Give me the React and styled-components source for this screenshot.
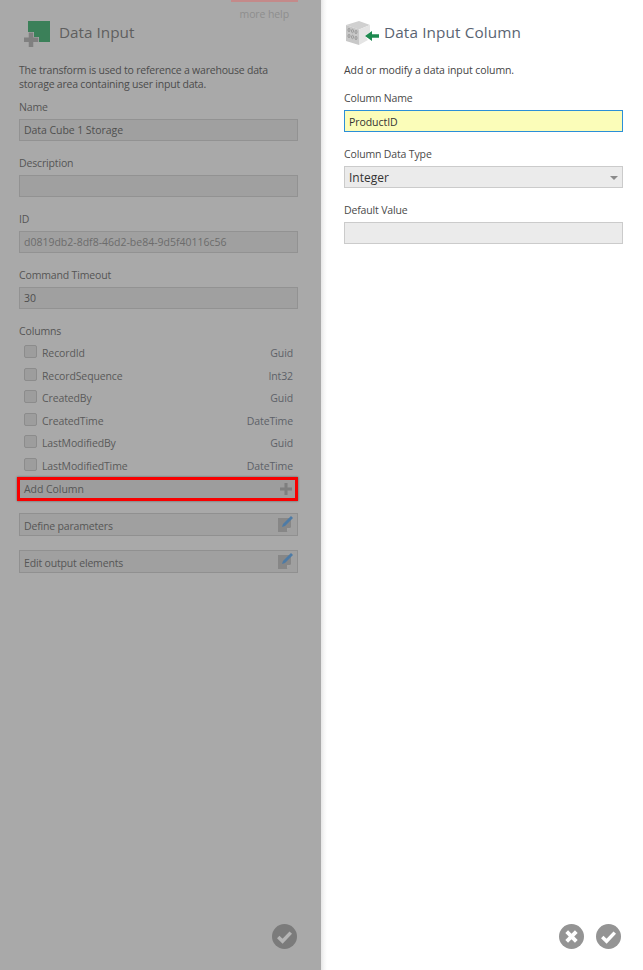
import React from "react";
import styled, { createGlobalStyle } from "styled-components";

const Global = createGlobalStyle`
  html, body { margin: 0; padding: 0; background: #fff; }
  #root { width: 643px; height: 970px; overflow: hidden; }
  * { box-sizing: border-box; }
`;

const Page = styled.div`
  display: flex;
  width: 643px;
  height: 970px;
  font-family: "Open Sans", "Noto Sans", sans-serif;
  font-size: 10.5px;
`;

const Panel = styled.section`
  position: relative;
  display: flex;
  flex-direction: column;
  height: 970px;
  padding: 0 ${p => (p.$dim ? "23px" : "20px")} 0 ${p => (p.$dim ? "19px" : "23px")};
  width: ${p => (p.$dim ? "321px" : "322px")};
  background: ${p => (p.$dim ? "#a9a9a9" : "linear-gradient(90deg, #e6e6e6 0, #f6f6f6 3px, #fff 6px)")};
  color: ${p => (p.$dim ? "#4d4d4d" : "#4a4a4a")};
`;

const HelpBar = styled.div`
  align-self: flex-end;
  width: 67px;
  height: 2px;
  background: #c48a8a;
`;

const MoreHelp = styled.div`
  align-self: flex-end;
  height: 14px;
  margin-top: 5px;
  padding-right: 9px;
  font-size: 10.5px;
  line-height: 14px;
  letter-spacing: -0.1px;
  color: #8e8e8e;
`;

const Header = styled.header`
  display: flex;
  align-items: center;
  gap: ${p => (p.$dim ? "9px" : "3px")};
  height: 24px;
  margin-top: ${p => (p.$dim ? "0" : "21px")};
  margin-left: ${p => (p.$dim ? "4px" : "1px")};
`;

const Title = styled.h1`
  margin: 0;
  padding-bottom: ${p => (p.$dim ? "3px" : "2px")};
  font-size: 15.3px;
  font-weight: 400;
  line-height: 22px;
  letter-spacing: ${p => (p.$dim ? "0" : "0.12px")};
  color: ${p => (p.$dim ? "#5f5f5f" : "#5a6472")};
`;

const Description = styled.p`
  margin: 18px 0 0;
  font-size: 10.5px;
  line-height: 14px;
  letter-spacing: ${p => (p.$dim ? "-0.21px" : "-0.09px")};
  color: ${p => (p.$dim ? "#4c4c4c" : "#444")};
`;

const Label = styled.label`
  display: block;
  height: 14px;
  margin-top: ${p => p.$top || 15}px;
  font-size: 10.5px;
  line-height: 14px;
  letter-spacing: -0.15px;
  color: ${p => (p.$dim ? "#555" : "#4a4a4a")};
`;

const Field = styled.div`
  display: flex;
  align-items: center;
  justify-content: space-between;
  height: 22px;
  margin-top: 5px;
  padding: ${p => (p.$focus || p.$big ? "1px" : "0")} 4px 0;
  font-size: ${p => (p.$big ? "12px" : "10.5px")};
  letter-spacing: ${p => (p.$faint || p.$big ? "0" : "-0.06px")};
  border: 1px solid ${p => (p.$focus ? "#2b8fd8" : p.$dim ? "#929292" : "#cbcbcb")};
  background: ${p => (p.$focus ? "#fbfdb9" : p.$dim ? "#a0a0a0" : "#ebebeb")};
  color: ${p => (p.$focus || !p.$dim ? "#333" : p.$faint ? "#6c6c6c" : "#4f4f4f")};
`;

const Caret = styled.span`
  width: 0;
  height: 0;
  margin-right: 0;
  border-left: 4.5px solid transparent;
  border-right: 4.5px solid transparent;
  border-top: 4px solid #8a8a8a;
`;

const ColumnList = styled.ul`
  display: flex;
  flex-direction: column;
  gap: 8.5px;
  margin: 8px 0 0;
  padding: 0 5px;
  list-style: none;
`;

const ColumnRow = styled.li`
  display: flex;
  align-items: center;
  height: 14px;
  color: #5a5a5a;
  font-size: 10.5px;
  letter-spacing: -0.12px;
`;

const Check = styled.span`
  width: 13px;
  height: 13px;
  margin-right: 5px;
  margin-top: -3px;
  border: 1px solid #8c8c8c;
  border-radius: 2px;
  background: #9d9d9d;
`;

const TypeName = styled.span`
  margin-left: auto;
  color: #5d6168;
`;

const ActionBox = styled.div`
  display: flex;
  align-items: center;
  justify-content: space-between;
  height: 23px;
  margin-top: ${p => p.$top}px;
  padding: 0 3px 0 4px;
  border: 1px solid #909090;
  background: #a0a0a0;
  color: #565656;
  font-size: 10.5px;
  letter-spacing: -0.17px;
`;

const ActionText = styled.span`
  padding-top: 4px;
`;

const AddColumn = styled(ActionBox)`
  height: 24px;
  margin: 4px 0 0 -2px;
  padding: 0 2px 0 4px;
  border: 3px solid #f80000;
  box-shadow: 0 0 2px rgba(0, 0, 0, 0.45);
  background: #9d9d9d;
  letter-spacing: -0.05px;
`;

const Footer = styled.footer`
  display: flex;
  justify-content: flex-end;
  gap: 12px;
  margin-top: auto;
  padding: 0 ${p => (p.$dim ? "1px" : "2px")} 21px 0;
`;

const Round = styled.svg`
  display: block;
  width: 25px;
  height: 25px;
`;

const IconBox = styled.svg`
  display: block;
  flex: none;
`;

const PlusIcon = () => (
  <IconBox width="14" height="14" viewBox="0 0 14 14">
    <path d="M5.500 1h3v4.500H13v3H8.500V13h-3V8.500H1v-3h4.500z" fill="#7f7f7f" />
  </IconBox>
);

const EditIcon = () => (
  <IconBox width="16" height="18" viewBox="0 0 16 18">
    <path d="M0 3h13v9l-4 5H0z" fill="#878787" />
    <path d="M9 17v-4h4z" fill="#a2a2a2" />
    <path d="M4 12l1-3L13 1l2 2L7 11z" fill="#4d7ba6" />
  </IconBox>
);

const InputIcon = () => (
  <IconBox width="27" height="27" viewBox="0 0 27 27">
    <path d="M5 1H27V22H16V17H11V12H5z" fill="#3b8059" />
    <path d="M5.750 12.500h4.500v5h5v4.500h-5v5h-4.500v-5H1v-4.500h4.750z" fill="#808080" />
  </IconBox>
);

const CubeIcon = () => (
  <IconBox width="36" height="26" viewBox="0 0 36 26">
    <path d="M1 5L14 1l11 4-11 4.500z" fill="#d0d0d0" />
    <path d="M1 5l13 4.500V25L1 21z" fill="#c8c8c8" />
    <path d="M14 9.500L25 5v7l-5 4 3 4-9 5z" fill="#e4e4e4" />
    <g fill="none" stroke="#969696" strokeWidth="0.900">
      <ellipse cx="4" cy="10" rx="1" ry="1.700" />
      <ellipse cx="7.500" cy="11" rx="1" ry="1.700" />
      <ellipse cx="11" cy="12" rx="1" ry="1.700" />
      <ellipse cx="4" cy="16" rx="1" ry="1.700" />
      <ellipse cx="7.500" cy="17" rx="1" ry="1.700" />
      <ellipse cx="11" cy="18" rx="1" ry="1.700" />
    </g>
    <path d="M20 16l7-5v3.200h7v3.600h-7V21z" fill="#1e8a50" />
  </IconBox>
);

const RoundIcon = ({ kind, fill, mark }) => (
  <Round viewBox="0 0 26 26">
    <circle cx="13" cy="13" r="13" fill={fill} />
    {kind === "x" ? (
      <path d="M8 8l10 10M18 8L8 18" stroke={mark} strokeWidth="4" fill="none" />
    ) : (
      <path d="M6.500 13.500l4.500 4.500 8.500-9" stroke={mark} strokeWidth="3.600" fill="none" />
    )}
  </Round>
);

const columns = [
  ["RecordId", "Guid"],
  ["RecordSequence", "Int32"],
  ["CreatedBy", "Guid"],
  ["CreatedTime", "DateTime"],
  ["LastModifiedBy", "Guid"],
  ["LastModifiedTime", "DateTime"],
];

export default function App() {
  return (
    <Page>
      <Global />
      <Panel $dim>
        <HelpBar />
        <MoreHelp>more help</MoreHelp>
        <Header $dim>
          <InputIcon />
          <Title $dim>Data Input</Title>
        </Header>
        <Description $dim>
          The transform is used to reference a warehouse data
          <br />
          storage area containing user input data.
        </Description>
        <Label $dim $top={9}>Name</Label>
        <Field $dim>Data Cube 1 Storage</Field>
        <Label $dim>Description</Label>
        <Field $dim />
        <Label $dim>ID</Label>
        <Field $dim $faint>d0819db2-8df8-46d2-be84-9d5f40116c56</Field>
        <Label $dim>Command Timeout</Label>
        <Field $dim>30</Field>
        <Label $dim>Columns</Label>
        <ColumnList>
          {columns.map(([name, type]) => (
            <ColumnRow key={name}>
              <Check />
              <span>{name}</span>
              <TypeName>{type}</TypeName>
            </ColumnRow>
          ))}
        </ColumnList>
        <AddColumn>
          <span>Add Column</span>
          <PlusIcon />
        </AddColumn>
        <ActionBox $top={12}>
          <ActionText>Define parameters</ActionText>
          <EditIcon />
        </ActionBox>
        <ActionBox $top={14}>
          <ActionText>Edit output elements</ActionText>
          <EditIcon />
        </ActionBox>
        <Footer $dim>
          <RoundIcon kind="check" fill="#7b7b7b" mark="#b5b5b5" />
        </Footer>
      </Panel>
      <Panel>
        <Header>
          <CubeIcon />
          <Title>Data Input Column</Title>
        </Header>
        <Description>Add or modify a data input column.</Description>
        <Label $top={14}>Column Name</Label>
        <Field $focus>ProductID</Field>
        <Label>Column Data Type</Label>
        <Field $big>
          Integer
          <Caret />
        </Field>
        <Label>Default Value</Label>
        <Field />
        <Footer>
          <RoundIcon kind="x" fill="#949494" mark="#fff" />
          <RoundIcon kind="check" fill="#949494" mark="#fff" />
        </Footer>
      </Panel>
    </Page>
  );
}
